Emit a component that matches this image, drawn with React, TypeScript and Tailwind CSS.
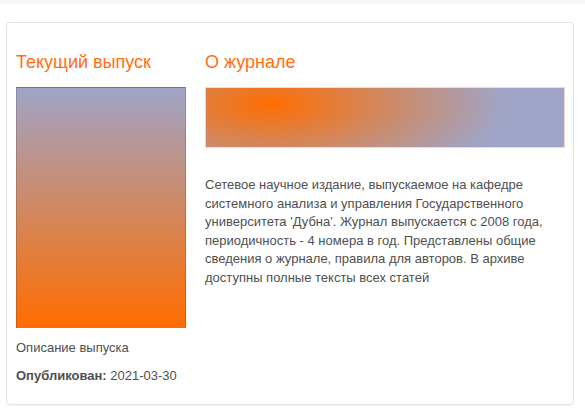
export default function App() {
	return (
		<div className="min-h-[417px] w-[585px] bg-white font-['Liberation_Sans',Arial,sans-serif]">
			<div className="h-[6px] bg-[linear-gradient(#f2f2f2,#ffffff)]" />
			<div className="mx-[6px] mt-[16px] w-[568px] rounded-[4px] border border-[#e2e2e2] px-[9px] pb-[19px] pt-[26px] shadow-[0_1px_1px_rgba(0,0,0,0.04)]">
				<div className="flex gap-[19px]">
					<IssueColumn />
					<AboutColumn />
				</div>
			</div>
		</div>
	)
}

function IssueColumn() {
	return (
		<div className="flex w-[170px] shrink-0 flex-col">
			<h2 className="text-[18px] leading-[26px] text-[#ff6f12]">Текущий выпуск</h2>
			<div className="mt-[12px] h-[241px] w-[170px] border border-black/15 bg-[linear-gradient(to_bottom,#a0a4c6,#ff6d00)]" />
			<div className="mt-[10px] text-[13px] leading-[19px] text-[#4f4f4f]">Описание выпуска</div>
			<div className="mt-[9px] text-[13px] leading-[19px] text-[#4f4f4f]">
				<span className="font-bold">Опубликован:</span> 2021-03-30
			</div>
		</div>
	)
}

function AboutColumn() {
	return (
		<div className="flex flex-1 flex-col">
			<h2 className="text-[18px] leading-[26px] text-[#ff6f12]">О журнале</h2>
			<div className="mt-[12px] h-[61px] w-[360px] border border-[#f3d9c8] bg-[radial-gradient(ellipse_290px_110px_at_65px_16px,#ff6d00_0%,#a0a4c6_80%)]" />
			<p className="mt-[28px] w-[360px] text-[13px] leading-[18.6px] text-[#4f4f4f]">
				Сетевое научное издание, выпускаемое на кафедре системного анализа и управления
				Государственного университета 'Дубна'. Журнал выпускается с 2008 года, периодичность
				- 4 номера в год. Представлены общие сведения о журнале, правила для авторов. В архиве
				доступны полные тексты всех статей
			</p>
		</div>
	)
}
